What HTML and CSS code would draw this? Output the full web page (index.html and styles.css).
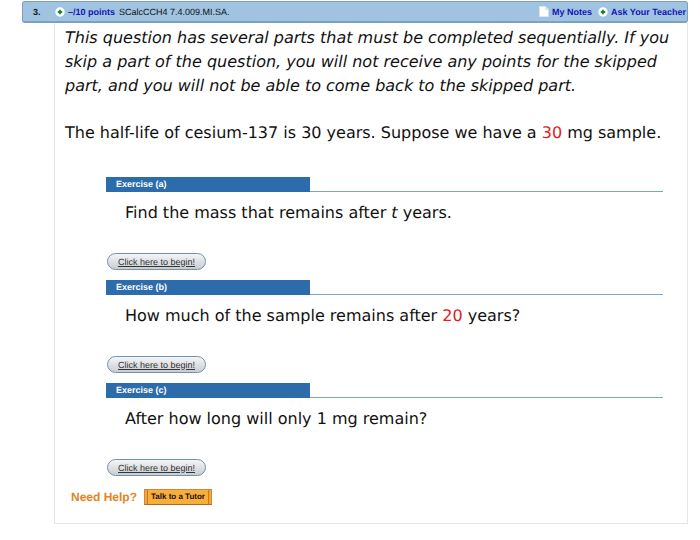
FILE: index.html
```html
<!DOCTYPE html>
<html lang="en">
<head>
<meta charset="utf-8">
<title>Question 3</title>
<link rel="stylesheet" href="styles.css">
</head>
<body>
<main class="question">
  <header class="bar">
    <span class="number">3.</span>
    <a class="points" href="#points"><svg class="plus" viewBox="0 0 10 10" aria-hidden="true"><circle cx="5" cy="5" r="4.7" fill="#fff"/><path d="M5 2.8v4.4M2.8 5h4.4" stroke="#178a1c" stroke-width="1.8"/></svg>–/10 points</a>
    <span class="source">SCalcCCH4 7.4.009.MI.SA.</span>
    <nav class="links">
      <a href="#notes"><svg class="note" viewBox="0 0 10 11" aria-hidden="true"><path d="M.5.5h6l3 3v7h-9z" fill="#fff" stroke="#dce5ec"/><path d="M6.5.5v3h3" fill="#e8eef2" stroke="#c5d2dc" stroke-width=".7"/></svg>My Notes</a>
      <a href="#teacher"><svg class="plus" viewBox="0 0 10 10" aria-hidden="true"><circle cx="5" cy="5" r="4.7" fill="#fff"/><path d="M5 2.8v4.4M2.8 5h4.4" stroke="#178a1c" stroke-width="1.8"/></svg>Ask Your Teacher</a>
    </nav>
  </header>
  <div class="panel">
    <p class="text"><em>This question has several parts that must be completed sequentially. If you<br>skip a part of the question, you will not receive any points for the skipped<br>part, and you will not be able to come back to the skipped part.</em></p>
    <p class="text">The half-life of cesium-137 is 30 years. Suppose we have a <span class="value">30</span> mg sample.</p>
    <div class="exercises">
      <section class="exercise">
        <div class="heading"><h2>Exercise (a)</h2></div>
        <p class="prompt">Find the mass that remains after <i>t</i> years.</p>
        <button class="begin" type="button">Click here to begin!</button>
      </section>
      <section class="exercise">
        <div class="heading"><h2>Exercise (b)</h2></div>
        <p class="prompt">How much of the sample remains after <span class="value">20</span> years?</p>
        <button class="begin" type="button">Click here to begin!</button>
      </section>
      <section class="exercise">
        <div class="heading"><h2>Exercise (c)</h2></div>
        <p class="prompt">After how long will only 1 mg remain?</p>
        <button class="begin" type="button">Click here to begin!</button>
      </section>
    </div>
    <div class="help">
      <span>Need Help?</span>
      <button class="tutor" type="button">Talk to a Tutor</button>
    </div>
  </div>
</main>
</body>
</html>
```
FILE: styles.css
```css
* {
  box-sizing: border-box;
}

body {
  margin: 0;
  background: #fff;
  color: #111;
  font-family: "DejaVu Sans", Verdana, sans-serif;
  text-rendering: geometricPrecision;
}

button {
  text-rendering: inherit;
}

h2,
p {
  margin: 0;
}

.question {
  margin: 1px 12px 16px 22px;
}

.bar {
  display: flex;
  align-items: center;
  height: 22px;
  padding: 0 1px 0 10px;
  border: 1px solid #7f9fbd;
  border-bottom-width: 2px;
  border-radius: 3px;
  background: #9fc3e1;
  font: 9px/12px "Liberation Sans", Arial, sans-serif;
  white-space: nowrap;
}

.bar a {
  display: flex;
  align-items: center;
  color: #1414b4;
  font-weight: bold;
  text-decoration: none;
}

.number {
  width: 22px;
  font-weight: bold;
}

.plus {
  width: 10px;
  height: 10px;
  margin-right: 3px;
}

.note {
  width: 10px;
  height: 11px;
  margin-right: 3px;
}

.source {
  margin-left: 4px;
}

.links {
  display: flex;
  gap: 6px;
  margin-left: auto;
}

.panel {
  margin-left: 32px;
  padding: 3px 12px 18px 10px;
  border: 1px solid #e6e6e6;
  border-top: 0;
}

.text {
  margin-bottom: 23px;
  font-size: 16px;
  line-height: 24px;
}

.value {
  color: #e01b22;
}

.exercises {
  margin: 32px 12px 0 41px;
}

.exercise {
  height: 103px;
}

.heading {
  border-bottom: 1px solid #7fa3c7;
}

.heading h2 {
  width: 204px;
  margin-bottom: -1px;
  padding-left: 10px;
  background: #2d6cab;
  color: #fff;
  font: bold 9px/15px "Liberation Sans", Arial, sans-serif;
}

.prompt {
  margin: 9px 0 28px 19px;
  font-size: 16px;
  line-height: 24px;
}

.begin {
  display: block;
  height: 17px;
  margin-left: 1px;
  padding: 0 10px;
  border: 1px solid #7390b0;
  border-radius: 9px;
  background: linear-gradient(#f4f5f7, #c9cdd2);
  color: #333;
  font: 9px/14px "Liberation Sans", Arial, sans-serif;
  text-decoration: underline;
}

.help {
  display: flex;
  align-items: center;
  gap: 7px;
  margin: 3px 0 0 6px;
  color: #e58422;
  font: bold 12px/16px "Liberation Sans", Arial, sans-serif;
}

.tutor {
  height: 16px;
  padding: 0 6px;
  border: 1px solid #c88a45;
  border-bottom-color: #b06a1c;
  background: linear-gradient(90deg, #f5a535 2px, #c9781c 2px 3px, #f9ad3b 3px calc(100% - 3px), #c9781c calc(100% - 3px) calc(100% - 2px), #f5a535 calc(100% - 2px));
  color: #111;
  font: bold 8px/14px "Liberation Sans", Arial, sans-serif;
}
```
